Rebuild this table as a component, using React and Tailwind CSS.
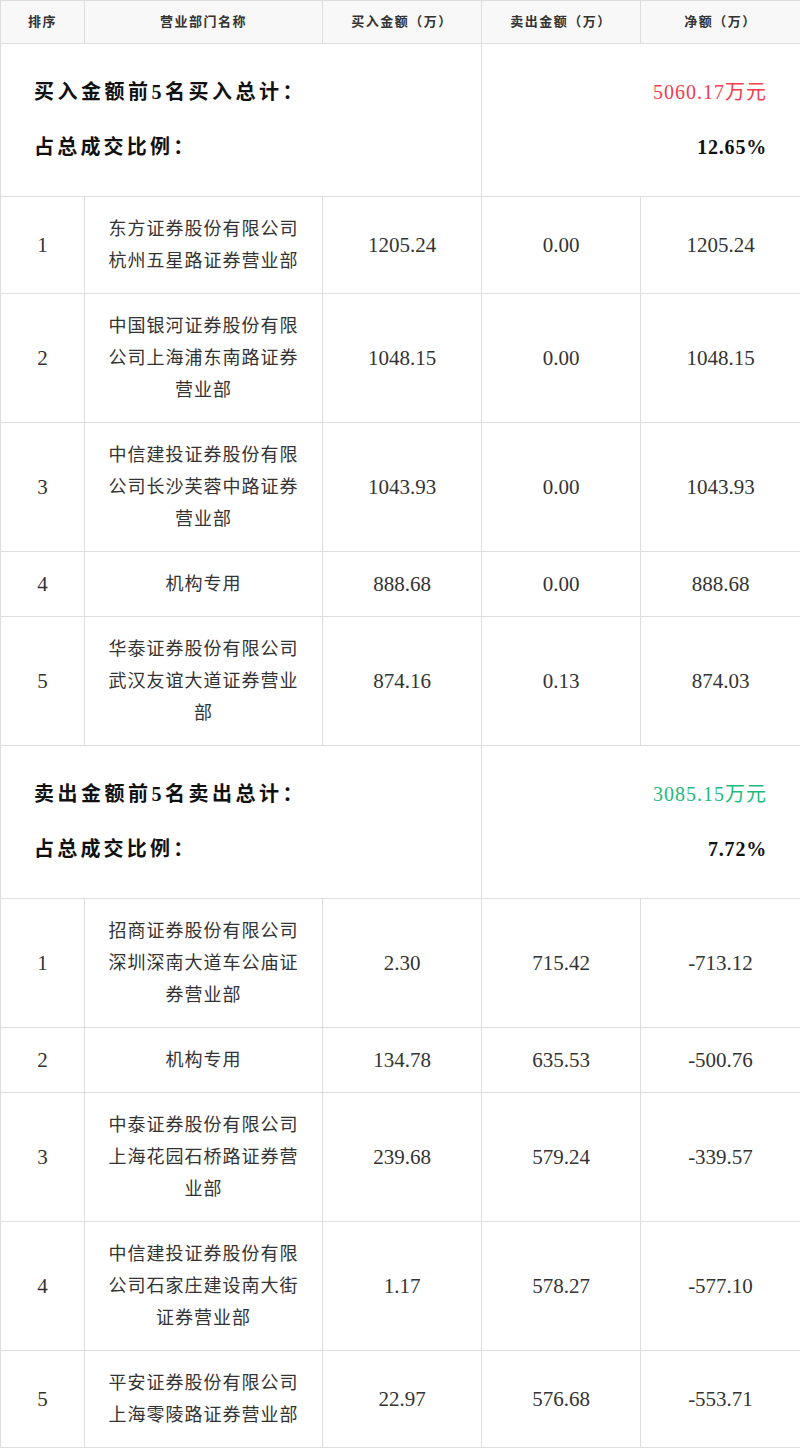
import React from "react";

const buy = [
  ["1", "东方证券股份有限公司杭州五星路证券营业部", "1205.24", "0.00", "1205.24"],
  ["2", "中国银河证券股份有限公司上海浦东南路证券营业部", "1048.15", "0.00", "1048.15"],
  ["3", "中信建投证券股份有限公司长沙芙蓉中路证券营业部", "1043.93", "0.00", "1043.93"],
  ["4", "机构专用", "888.68", "0.00", "888.68"],
  ["5", "华泰证券股份有限公司武汉友谊大道证券营业部", "874.16", "0.13", "874.03"],
];

const sell = [
  ["1", "招商证券股份有限公司深圳深南大道车公庙证券营业部", "2.30", "715.42", "-713.12"],
  ["2", "机构专用", "134.78", "635.53", "-500.76"],
  ["3", "中泰证券股份有限公司上海花园石桥路证券营业部", "239.68", "579.24", "-339.57"],
  ["4", "中信建投证券股份有限公司石家庄建设南大街证券营业部", "1.17", "578.27", "-577.10"],
  ["5", "平安证券股份有限公司上海零陵路证券营业部", "22.97", "576.68", "-553.71"],
];

function Summary({ title, amount, color, pct }) {
  return (
    <tr>
      <td colSpan={3} className="border border-[#dddddd] pl-[33px] pt-[34px] pb-[35px] align-top">
        <div className="flex flex-col gap-[27px] text-[20px] font-bold leading-[28px] text-[#111]">
          <div className="tracking-[3.5px]">{title}</div>
          <div className="tracking-[3.2px]">占总成交比例：</div>
        </div>
      </td>
      <td colSpan={2} className="border border-[#dddddd] pr-[33px] pt-[34px] pb-[35px] align-top text-right">
        <div className="flex flex-col gap-[27px] text-[20px] leading-[28px]">
          <div className={`tracking-[1px] ${color}`}>{amount}</div>
          <div className="font-bold text-[#111] tracking-[0.8px]">{pct}</div>
        </div>
      </td>
    </tr>
  );
}

function Row({ r }) {
  return (
    <tr className="text-[#333]">
      <td className="border border-[#dddddd] py-4 text-center text-[21px] leading-[32px]">{r[0]}</td>
      <td className="border border-[#dddddd] py-4 px-[20px] text-center text-[18px] tracking-[1px] leading-[32px]">{r[1]}</td>
      <td className="border border-[#dddddd] py-4 text-center text-[21px] leading-[32px]">{r[2]}</td>
      <td className="border border-[#dddddd] py-4 text-center text-[21px] leading-[32px]">{r[3]}</td>
      <td className="border border-[#dddddd] py-4 text-center text-[21px] leading-[32px]">{r[4]}</td>
    </tr>
  );
}

export default function App() {
  return (
    <div className="w-[800px] bg-white font-['Liberation_Serif','Noto_Sans_CJK_SC',serif]">
      <table className="w-[800px] table-fixed border-collapse">
        <colgroup>
          <col className="w-[84px]" />
          <col className="w-[238px]" />
          <col className="w-[159px]" />
          <col className="w-[159px]" />
          <col className="w-[160px]" />
        </colgroup>
        <thead>
          <tr className="bg-[#f8f8f8] text-[13px] font-bold text-[#333] tracking-[1.5px]">
            <th className="h-[43px] border border-[#dddddd] p-0 font-bold">排序</th>
            <th className="h-[43px] border border-[#dddddd] p-0 font-bold">营业部门名称</th>
            <th className="h-[43px] border border-[#dddddd] p-0 font-bold">买入金额（万）</th>
            <th className="h-[43px] border border-[#dddddd] p-0 font-bold">卖出金额（万）</th>
            <th className="h-[43px] border border-[#dddddd] p-0 font-bold">净额（万）</th>
          </tr>
        </thead>
        <tbody>
          <Summary title="买入金额前5名买入总计：" amount="5060.17万元" color="text-[#f23c4f]" pct="12.65%" />
          {buy.map((r) => (
            <Row key={"b" + r[0]} r={r} />
          ))}
          <Summary title="卖出金额前5名卖出总计：" amount="3085.15万元" color="text-[#1fba7c]" pct="7.72%" />
          {sell.map((r) => (
            <Row key={"s" + r[0]} r={r} />
          ))}
        </tbody>
      </table>
    </div>
  );
}
